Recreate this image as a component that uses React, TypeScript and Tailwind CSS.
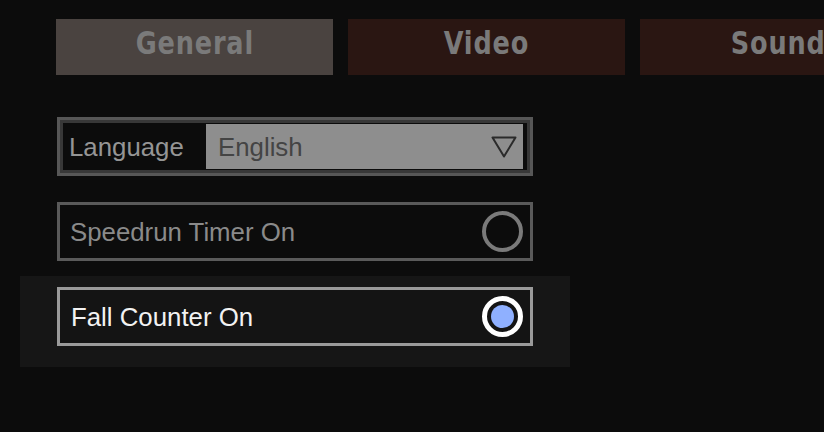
import React from 'react';

const tabs = [
  { label: 'General', active: true },
  { label: 'Video', active: false },
  { label: 'Sound', active: false },
];

const Radio = ({ on }: { on: boolean }) =>
  on ? (
    <div className="w-[41px] h-[41px] rounded-full border-[5px] border-white flex items-center justify-center bg-[#141414]">
      <div className="w-[23px] h-[23px] rounded-full bg-[#8fb0ff]" />
    </div>
  ) : (
    <div className="w-[41px] h-[41px] rounded-full border-[4px] border-[#7a7a7a]" />
  );

const App = () => {
  return (
    <div
      className="w-[824px] h-[432px] overflow-hidden bg-[#0c0c0c]"
      style={{ fontFamily: '"Liberation Sans", Arial, sans-serif' }}
    >
      {/* tab bar */}
      <div className="flex gap-[15px] pl-[56px] pt-[19px]">
        {tabs.map((t) => (
          <div
            key={t.label}
            className={`shrink-0 w-[277px] h-[56px] flex items-center justify-center pb-[9px] ${
              t.active ? 'bg-[#4a4340]' : 'bg-[#2a1612]'
            }`}
          >
            <span
              className="inline-block scale-x-[0.8] text-[32px] leading-none font-bold text-[#7a7a7a] tracking-[1px]"
              style={{ fontFamily: '"DejaVu Sans", sans-serif' }}
            >
              {t.label}
            </span>
          </div>
        ))}
      </div>

      {/* settings */}
      <div className="flex flex-col pl-[20px] mt-[31px] text-[25.8px]">
        <div className="w-[550px] px-[37px] pt-[11px] pb-[15px]">
          <div className="h-[59px] border-[3px] border-[#575757]">
            <div className="h-full border-[3px] border-[#383838] flex items-center py-[1px] pr-[4px] pl-[6px]">
              <span className="text-[#959595] pt-[1px]">Language</span>
              <div className="ml-auto w-[317px] h-[45px] bg-[#8e8e8e] flex items-center pl-[12px] pr-[6px]">
                <span className="text-[#444444] pt-[1px]">English</span>
                <svg className="ml-auto" width="26" height="22" viewBox="0 0 26 22">
                  <path d="M1.5 1.5 L24.5 1.5 L13 20.5 Z" fill="none" stroke="#2a2a2a" strokeWidth="2" strokeLinejoin="round" />
                </svg>
              </div>
            </div>
          </div>
        </div>

        <div className="w-[550px] px-[37px] pt-[11px] pb-[15px]">
          <div className="h-[59px] border-[3px] border-[#5a5a5a] flex items-center pl-[10px] pr-[7px]">
            <span className="text-[#8a8a8a] pt-[1px]">Speedrun Timer On</span>
            <div className="ml-auto">
              <Radio on={false} />
            </div>
          </div>
        </div>

        <div className="w-[550px] px-[37px] pt-[11px] pb-[21px] bg-[#161616]">
          <div className="h-[59px] border-[3px] border-[#9a9a9a] bg-[#141414] flex items-center pl-[11px] pr-[7px]">
            <span className="text-[#f2f2f2] pt-[1px]">Fall Counter On</span>
            <div className="ml-auto">
              <Radio on={true} />
            </div>
          </div>
        </div>
      </div>
    </div>
  );
};

export default App;
